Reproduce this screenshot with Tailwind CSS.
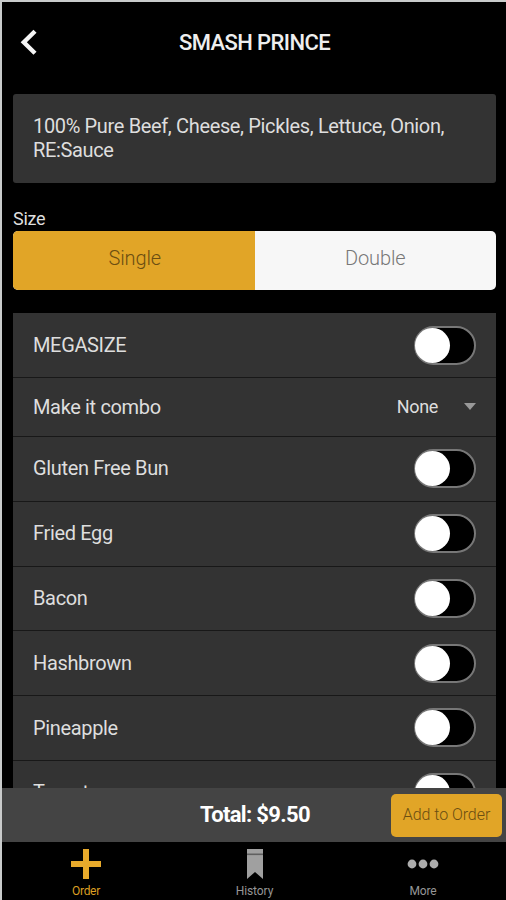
<!DOCTYPE html>
<html lang="en">
<head>
<meta charset="utf-8">
<title>Smash Prince</title>
<script src="https://cdn.jsdelivr.net/npm/@tailwindcss/browser@4"></script>
</head>
<body class="bg-black">
<div class="flex h-[900px] w-[506px] flex-col overflow-hidden border-t-2 border-l-2 border-[#c9cbcb] bg-black font-['Roboto',sans-serif] text-[#dedede]">
  <header class="grid h-[92px] shrink-0 grid-cols-[54px_1fr_54px] items-start">
    <svg class="mt-[27px] ml-[18px] h-[26px] w-[18px]" viewBox="0 0 18 26" fill="none" stroke="#f5f5f5" stroke-width="4.4"><path d="M15 2.2 3.8 13.2 15 24.2"/></svg>
    <h1 class="pt-[26px] pl-px text-center text-[22px] leading-[30px] font-medium tracking-[-0.6px] text-[#eee]">SMASH PRINCE</h1>
  </header>
  <main class="flex min-h-0 flex-1 flex-col overflow-hidden pr-[10px] pl-[11px]">
    <p class="h-[89px] shrink-0 rounded-[3px] bg-[#333] px-5 pt-[20px] text-[20px] leading-[24px] tracking-[-0.35px]">100% Pure Beef, Cheese, Pickles, Lettuce, Onion, RE:Sauce</p>
    <h2 class="mt-[24px] h-[24px] shrink-0 text-[18px] leading-[24px] tracking-[-0.3px]">Size</h2>
    <div class="grid h-[59px] shrink-0 grid-cols-2 overflow-hidden rounded-[5px] bg-[#f7f7f7] text-center text-[20px] leading-[54px] font-light tracking-[-0.1px]">
      <button class="bg-[#e1a527] pb-[5px] pl-[2px] text-[#6b4e12]">Single</button>
      <button class="pb-[5px] text-[#777]">Double</button>
    </div>
    <ul id="options" class="mt-[23px] text-[20px] tracking-[-0.35px]">
      <li class="flex h-[65px] items-center justify-between border-b-[1.5px] border-[#181818] bg-[#333] px-5"><span>MEGASIZE</span></li>
      <li class="flex h-[59px] items-center justify-between border-b-[1.5px] border-[#181818] bg-[#333] px-5">
        <span>Make it combo</span>
        <span class="flex items-center pb-[2px] text-[18px]"><span>None</span><svg class="ml-[26px] h-[7px] w-[12px]" viewBox="0 0 12 7"><path d="M0 0h12L6 7z" fill="#999"/></svg></span>
      </li>
      <li class="flex h-[64.8px] items-center justify-between border-b-[1.5px] border-[#181818] bg-[#333] px-5 pb-px"><span>Gluten Free Bun</span></li>
      <li class="flex h-[64.8px] items-center justify-between border-b-[1.5px] border-[#181818] bg-[#333] px-5 pb-px"><span>Fried Egg</span></li>
      <li class="flex h-[64.8px] items-center justify-between border-b-[1.5px] border-[#181818] bg-[#333] px-5"><span>Bacon</span></li>
      <li class="flex h-[64.8px] items-center justify-between border-b-[1.5px] border-[#181818] bg-[#333] px-5"><span>Hashbrown</span></li>
      <li class="flex h-[64.8px] items-center justify-between border-b-[1.5px] border-[#181818] bg-[#333] px-5 pb-px"><span>Pineapple</span></li>
      <li class="flex h-[64.8px] items-center justify-between border-b-[1.5px] border-[#181818] bg-[#333] px-5 pb-px"><span>Tomato</span></li>
    </ul>
  </main>
  <section class="grid h-[54px] shrink-0 grid-cols-[1fr_111px] items-center bg-[#444] pr-[4px]">
    <strong class="pl-[117px] text-center text-[22px] leading-[30px] font-bold tracking-[-0.65px] text-white">Total: $9.50</strong>
    <button class="h-[43px] rounded-[5px] bg-[#e1a527] text-[16px] font-light tracking-[-0.05px] text-[#6b4e12]">Add to Order</button>
  </section>
  <nav class="grid h-[58px] shrink-0 grid-cols-[168px_168px_170px] text-center text-[12px] leading-[14px] tracking-[-0.1px] text-[#969696]">
    <a class="flex flex-col items-center pt-[6px] text-[#dc9f22]"><svg class="h-[32px] w-[32px]" viewBox="0 0 32 32"><path d="M13 1h6v12h12v6H19v12h-6V19H1v-6h12z" fill="#e8aa2b"/></svg><span class="mt-[4px] tracking-[-0.3px]">Order</span></a>
    <a class="flex flex-col items-center pt-[6px] pl-px"><svg class="h-[32px] w-[18px]" viewBox="0 0 18 32"><path d="M1 1h16v30l-8-7-8 7z" fill="#a0a0a0"/><path d="M1 5.5h16v1.6H1z" fill="#606060"/></svg><span class="mt-[4px]">History</span></a>
    <a class="flex flex-col items-center pt-[6px]"><svg class="h-[32px] w-[32px]" viewBox="0 0 32 32" fill="#adadad"><circle cx="5" cy="16" r="4.4"/><circle cx="16" cy="16" r="4.4"/><circle cx="27" cy="16" r="4.4"/></svg><span class="mt-[4px]">More</span></a>
  </nav>
</div>
<template id="toggle"><span class="flex h-[39px] w-[62px] items-center rounded-full border-2 border-[#777] bg-black"><span class="-ml-px h-[35px] w-[35px] rounded-full bg-white"></span></span></template>
<script>
  document.querySelectorAll('#options li').forEach(function (row) {
    if (row.children.length === 1) row.appendChild(document.getElementById('toggle').content.cloneNode(true));
  });
</script>
</body>
</html>
